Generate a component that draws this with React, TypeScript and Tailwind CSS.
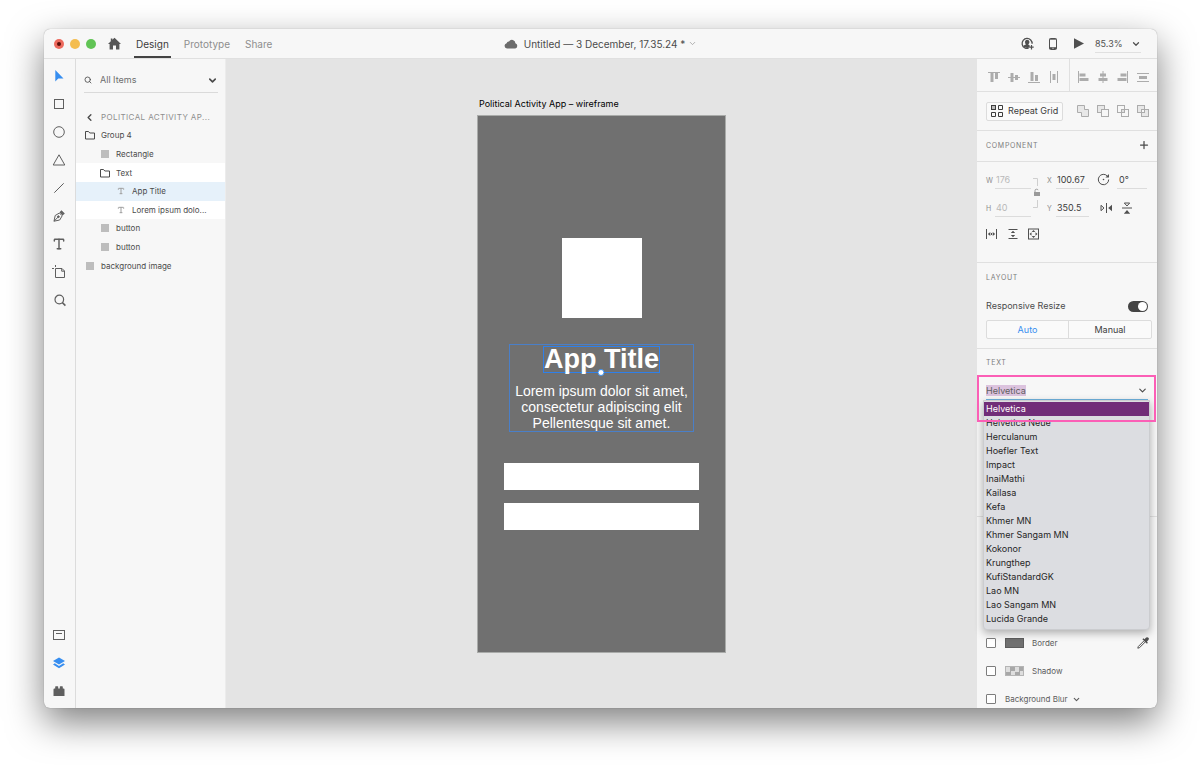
import { ReactNode, useState } from 'react';
import { ChevronDown, ChevronLeft, Plus, Search, Type } from 'lucide-react';

const FONTS = [
  'Helvetica',
  'Helvetica Neue',
  'Herculanum',
  'Hoefler Text',
  'Impact',
  'InaiMathi',
  'Kailasa',
  'Kefa',
  'Khmer MN',
  'Khmer Sangam MN',
  'Kokonor',
  'Krungthep',
  'KufiStandardGK',
  'Lao MN',
  'Lao Sangam MN',
  'Lucida Grande',
];

interface Layer {
  name: string;
  kind: 'group' | 'shape' | 'text';
  indent: string;
  bg?: string;
}

const LAYERS: Layer[] = [
  { name: 'Group 4', kind: 'group', indent: 'pl-[9px]' },
  { name: 'Rectangle', kind: 'shape', indent: 'pl-6' },
  { name: 'Text', kind: 'group', indent: 'pl-6', bg: 'bg-white' },
  { name: 'App Title', kind: 'text', indent: 'pl-10', bg: 'bg-[#e6f1fa]' },
  { name: 'Lorem ipsum dolo...', kind: 'text', indent: 'pl-10', bg: 'bg-white' },
  { name: 'button', kind: 'shape', indent: 'pl-6' },
  { name: 'button', kind: 'shape', indent: 'pl-6' },
  { name: 'background image', kind: 'shape', indent: 'pl-[9px]' },
];

// Small outlined / filled drawing on a square grid
function Icon({ size = 12, className = '', children }: { size?: number; className?: string; children: ReactNode }) {
  return (
    <svg
      width={size}
      height={size}
      viewBox={`0 0 ${size} ${size}`}
      fill="none"
      stroke="currentColor"
      strokeWidth="1"
      className={`shrink-0 ${className}`}
      aria-hidden="true"
    >
      {children}
    </svg>
  );
}

// ============================================================
// TITLE BAR
// ============================================================

function TitleBar() {
  return (
    <header className="grid h-[30px] shrink-0 grid-cols-[1fr_auto_1fr] border-b border-[#e0e0e0] text-[10px] leading-3">
      <div className="flex items-center pl-[10px]">
        <div className="flex gap-[6px]">
          <span className="flex size-[10px] items-center justify-center rounded-full bg-[#ed6a5e]">
            <span className="size-1 rounded-full bg-[#5c0f0a]" />
          </span>
          <span className="size-[10px] rounded-full bg-[#f4bd50]" />
          <span className="size-[10px] rounded-full bg-[#61c455]" />
        </div>
        <button aria-label="Home" className="ml-3 text-[#555]">
          <Icon size={13}>
            <path d="M6.5.8 13 7h-1.6v5.4H8V8.6H5v3.8H1.6V7H0L2.8 4.3V1.4h1.6v1.4z" fill="currentColor" stroke="none" />
          </Icon>
        </button>
        <nav className="ml-[13px] flex h-full gap-[11px] text-[#8e8e8e]">
          <a href="#design" className="flex items-center border-b-2 border-[#444] px-[2px] pt-[2px] text-[#3c3c3c]">Design</a>
          <a href="#prototype" className="flex items-center px-[2px]">Prototype</a>
          <a href="#share" className="flex items-center px-[2px]">Share</a>
        </nav>
      </div>

      <button className="flex items-center text-[#4b4b4b]">
        <Icon size={14} className="mr-[6px] text-[#6b6b6b]">
          <path d="M3 11.5A2.7 2.7 0 0 1 2.6 6.2 2.3 2.3 0 0 1 5 4.6 3.4 3.4 0 0 1 11.4 6.3 2.7 2.7 0 0 1 11.2 11.5z" fill="currentColor" stroke="none" />
        </Icon>
        Untitled — 3 December, 17.35.24 *
        <ChevronDown size={9} strokeWidth={2} className="ml-[3px] text-[#999]" />
      </button>

      <div className="flex items-center justify-end pr-4 text-[#505050]">
        <button aria-label="Invite" className="mr-[13px]">
          <Icon size={13}>
            <path d="M11.1 6.8A5 5 0 1 0 7.6 11.2" strokeWidth="1.3" />
            <path d="M6.2 2.7c1.5 0 2.2 1 2.2 2.3 0 1-.4 1.8-1 2.2v.6l1.4.7-.3 1.9-2.3.6-2.9-.8-.8-1.6 2.2-.8v-.6C4.3 6.8 4 6 4 5c0-1.3.7-2.3 2.2-2.3z" fill="currentColor" stroke="none" />
            <path d="M10.5 8v4.4M8.3 10.2h4.4" strokeWidth="1.2" />
          </Icon>
        </button>
        <button aria-label="Preview on device" className="mr-[14px]">
          <Icon size={12}>
            <rect x="2.5" y=".5" width="7" height="11" rx="1" />
            <path d="M2.5 1.2h7M2.5 9.7h7M2.5 10.5h7" />
            <path d="M5.5 10.3h1" stroke="#f7f7f7" />
          </Icon>
        </button>
        <button aria-label="Play" className="mr-[11px]">
          <Icon size={11}>
            <path d="M1 .3 11 5.500 1 10.700z" fill="currentColor" stroke="none" />
          </Icon>
        </button>
        <button className="flex w-[46px] items-center justify-between border-b border-[#e0e0e0] pt-[3px] pb-[2px] text-[9px]">
          85.3%
          <ChevronDown size={10} strokeWidth={3} />
        </button>
      </div>
    </header>
  );
}

// ============================================================
// LEFT SIDE
// ============================================================

const TOOLS: { label: string; icon: ReactNode; className?: string }[] = [
  { label: 'Select', className: 'text-[#378ef0]', icon: <path d="M3.300 1v11.500l3-3H11.500z" fill="currentColor" stroke="none" /> },
  { label: 'Rectangle', icon: <rect x="2.5" y="2.5" width="9" height="9" /> },
  { label: 'Ellipse', icon: <circle cx="7" cy="7" r="5.3" /> },
  { label: 'Polygon', icon: <path d="M7 1.800 12.800 12H1.200z" /> },
  { label: 'Line', icon: <path d="M2.300 11.700 11.700 2.300" /> },
  {
    label: 'Pen',
    icon: (
      <>
        <path d="M2 12.2 3.2 6.5 7.4 4l2.800 2.800-2.500 4.200z" />
        <path d="M8 2.800 11.2 6M9 1.800l3.300 3.300" strokeWidth="1.4" />
        <path d="M2 12.2 6 8.200" />
        <circle cx="6.4" cy="7.7" r=".9" fill="currentColor" />
      </>
    ),
  },
  { label: 'Text', icon: null },
  {
    label: 'Artboard',
    icon: (
      <>
        <path d="M3.5 3.5h6.500l2.500 2.500v6.500h-9z" />
        <path d="M9.700 3.500v2.700h2.800M3.500 0v2M0 3.500h2" />
      </>
    ),
  },
  {
    label: 'Zoom',
    icon: (
      <>
        <circle cx="7.3" cy="6.5" r="4.3" strokeWidth="1.2" />
        <path d="m10.4 9.6 3 3" strokeWidth="1.5" />
      </>
    ),
  },
];

function ToolBar() {
  return (
    <aside className="flex w-8 shrink-0 flex-col justify-between border-r border-[#dcdcdc] py-[3px] text-[#5f5f5f]">
      <div className="flex flex-col">
        {TOOLS.map(tool => (
          <button key={tool.label} aria-label={tool.label} className={`flex h-7 items-center pl-2 ${tool.className ?? ''}`}>
            {tool.icon ? <Icon size={14}>{tool.icon}</Icon> : <Type size={14} strokeWidth={2.5} />}
          </button>
        ))}
      </div>
      <div className="flex flex-col">
        <button aria-label="Libraries" className="flex h-7 items-center pl-[9px]">
          <Icon>
            <rect x=".5" y="1.5" width="11" height="9" />
            <path d="M3 4.5h6" />
          </Icon>
        </button>
        <button aria-label="Layers" className="flex h-7 items-center pl-[9px] text-[#378ef0]">
          <Icon>
            <path d="M6 .5 12 4 6 7.5 0 4z" fill="currentColor" stroke="none" />
            <path d="M1.800 6.300 0 7.600 6 11.300 12 7.600 10.200 6.300 6 8.900z" fill="currentColor" stroke="none" />
          </Icon>
        </button>
        <button aria-label="Plugins" className="flex h-7 items-center pl-[9px]">
          <Icon>
            <path d="M.5 4.500q0-1 1-1h.7V1.800q0-.6.600-.6h1.800q.6 0 .6.600v1.700h1.600V1.800q0-.6.600-.6h1.800q.6 0 .6.600v1.700h.7q1 0 1 1V11H.5z" fill="currentColor" stroke="none" />
          </Icon>
        </button>
      </div>
    </aside>
  );
}

function LayersPanel() {
  return (
    <aside className="w-[150px] shrink-0 border-r border-[#ececec] text-[8px] leading-3 text-[#4b4b4b]">
      <label className="mr-[7px] ml-2 mt-[9px] flex h-[25px] items-center border-b border-[#dadada]">
        <Search size={8} strokeWidth={2.5} className="mr-2" />
        <input
          aria-label="Filter layers"
          placeholder="All Items"
          className="min-w-0 flex-1 bg-transparent text-[9px] outline-none placeholder:text-[#6e6e6e]"
        />
        <ChevronDown size={11} strokeWidth={3.5} />
      </label>
      <button className="mt-[18px] flex h-3 w-full items-center pl-2 text-[#8e8e8e]">
        <ChevronLeft size={11} strokeWidth={3} className="mr-[6px] text-[#4b4b4b]" />
        <span className="tracking-wider">POLITICAL ACTIVITY AP...</span>
      </button>
      <ul className="mt-[3px] grid h-[149px] auto-rows-fr">
        {LAYERS.map((layer, idx) => (
          <li key={idx} className={`flex items-center gap-[6px] ${layer.indent} ${layer.bg ?? ''}`}>
            <span className="flex w-[10px] justify-center">
              {layer.kind === 'group' && (
                <Icon size={10}>
                  <path d="M.5 1.500h3l1.300 1.500h4.700v6h-9z" />
                </Icon>
              )}
              {layer.kind === 'shape' && <span className="size-2 bg-[#bdbdbd]" />}
              {layer.kind === 'text' && <Type size={8} strokeWidth={3} className="text-[#a0a0a0]" />}
            </span>
            {layer.name}
          </li>
        ))}
      </ul>
    </aside>
  );
}

// ============================================================
// CANVAS
// ============================================================

function Canvas() {
  return (
    <main className="flex min-w-0 flex-1 flex-col items-center bg-[#e4e4e4] pt-[39px]">
      <div className="w-[249px]">
        <p className="mb-[5px] pl-[2px] text-[9px] leading-3 text-black">Political Activity App – wireframe</p>
        <div className="flex h-[538px] flex-col items-center border border-[#a9aba9] bg-[#707070] pt-[122px] font-['Liberation_Sans',Arial,sans-serif] text-white">
          <div className="size-20 bg-white" />
          <div className="mt-[26px] flex w-[185px] flex-col items-center border border-[#4a7fc8] pt-px">
            <h1 className="relative border border-[#2f80ea] text-[27px] leading-[25px] font-bold">
              App Title
              <span className="absolute -bottom-1 left-1/2 size-[7px] -translate-x-1/2 rounded-full border border-[#378ef0] bg-white" />
            </h1>
            <p className="mt-[10px] text-center text-[14px] leading-4">
              Lorem ipsum dolor sit amet,
              <br />
              consectetur adipiscing elit
              <br />
              Pellentesque sit amet.
            </p>
          </div>
          <div className="mt-[31px] h-[27px] w-[195px] bg-white" />
          <div className="mt-[13px] h-[27px] w-[195px] bg-white" />
        </div>
      </div>
    </main>
  );
}

// ============================================================
// INSPECTOR
// ============================================================

const ALIGN_VERTICAL: { label: string; icon: ReactNode }[] = [
  { label: 'Align top', icon: <><path d="M0 1.5h12" /><path d="M4 2v9M8.500 2v6" strokeWidth="3" /></> },
  { label: 'Align middle', icon: <><path d="M0 6.5h12" /><path d="M4 2v9M8.500 4v5" strokeWidth="3" /></> },
  { label: 'Align bottom', icon: <><path d="M0 11.5h12" /><path d="M4 1v9M8.500 4v6" strokeWidth="3" /></> },
  { label: 'Distribute horizontally', icon: <><path d="M2.5 0v12M9.5 0v12" /><path d="M6 3v6" strokeWidth="3" /></> },
];

const ALIGN_HORIZONTAL: { label: string; icon: ReactNode }[] = [
  { label: 'Align left', icon: <><path d="M1.5 0v12" /><path d="M2.500 4h6M2.500 8.500h9" strokeWidth="3" /></> },
  { label: 'Align center', icon: <><path d="M6 0v12" /><path d="M3 4h6M1.500 8.500h9" strokeWidth="3" /></> },
  { label: 'Align right', icon: <><path d="M10.5 0v12" /><path d="M3.500 4h6M.5 8.500h9" strokeWidth="3" /></> },
  { label: 'Distribute vertically', icon: <><path d="M0 2.500h12M0 10.500h12" /><path d="M2 6.500h8" strokeWidth="3" /></> },
];

const BOOLEANS: { label: string; icon: ReactNode }[] = [
  { label: 'Add', icon: <path d="M.5.5h7v4h4v7h-7v-4h-4z" fill="#e8e8e8" /> },
  { label: 'Subtract', icon: <><rect x=".5" y=".5" width="7" height="7" fill="#e8e8e8" /><rect x="4.5" y="4.5" width="7" height="7" fill="#f7f7f7" /></> },
  { label: 'Intersect', icon: <><rect x=".5" y=".5" width="7" height="7" /><rect x="4.5" y="4.5" width="7" height="7" /><rect x="4.5" y="4.5" width="3" height="3" fill="#e0e0e0" /></> },
  { label: 'Exclude overlap', icon: <><rect x=".5" y=".5" width="7" height="7" fill="#e8e8e8" /><rect x="4.5" y="4.5" width="7" height="7" fill="#e8e8e8" /><rect x="4.5" y="4.5" width="3" height="3" fill="#f7f7f7" /></> },
];

function IconButtons({ items, className = '' }: { items: { label: string; icon: ReactNode }[]; className?: string }) {
  return (
    <div className={`flex items-center gap-2 ${className}`}>
      {items.map(item => (
        <button key={item.label} aria-label={item.label}>
          <Icon>{item.icon}</Icon>
        </button>
      ))}
    </div>
  );
}

function SectionTitle({ children }: { children: ReactNode }) {
  return <h2 className="text-[7px] leading-3 tracking-widest text-[#7c7c7c]">{children}</h2>;
}

function NumberField({ label, value, disabled, className = '' }: { label: string; value: string; disabled?: boolean; className?: string }) {
  return (
    <label className={`flex h-[19px] items-center text-[7px] text-[#8e8e8e] ${className}`}>
      <span className="w-[9px] pt-[2px]">{label}</span>
      <input
        defaultValue={value}
        disabled={disabled}
        className="h-full min-w-0 flex-1 border-b border-[#dcdcdc] bg-transparent pl-px text-[9px] text-[#3c3c3c] outline-none disabled:text-[#b9b9b9]"
      />
    </label>
  );
}

function Transform() {
  return (
    <section className="h-[101px] border-b border-[#e0e0e0] pt-2 pl-[9px]">
      <div className="flex">
        <div className="flex flex-col gap-[9px]">
          <NumberField label="W" value="176" disabled className="w-[45px]" />
          <NumberField label="H" value="40" disabled className="w-[45px]" />
        </div>
        <button aria-label="Lock aspect" className="w-4 text-[#cfcfcf]">
          <svg width="16" height="47" viewBox="0 0 16 47" fill="none" stroke="currentColor" aria-hidden="true">
            <path d="M2 8.500h4.500V16M2 37.500h4.500V30" />
            <rect x="3" y="22" width="6" height="4" fill="#9a9a9a" stroke="none" />
            <path d="M4 22v-1.300q0-1.500 1.500-1.500t1.500 1" stroke="#9a9a9a" />
          </svg>
        </button>
        <div className="flex flex-col gap-[9px]">
          <NumberField label="X" value="100.67" className="w-[42px]" />
          <NumberField label="Y" value="350.5" className="w-[42px]" />
        </div>
        <div className="ml-2 flex flex-col gap-[9px] text-[#505050]">
          <div className="flex h-[19px] items-center gap-[7px]">
            <Icon size={13}>
              <path d="M10.500 3.200A5.200 5.200 0 1 0 11.700 6.500" />
              <path d="M12 1v3.600H8.400z" fill="currentColor" stroke="none" />
              <circle cx="6.5" cy="6.5" r=".8" fill="currentColor" stroke="none" />
            </Icon>
            <input
              aria-label="Rotation"
              defaultValue="0°"
              className="h-full w-[30px] border-b border-[#dcdcdc] bg-transparent pl-[2px] text-[9px] text-[#3c3c3c] outline-none"
            />
          </div>
          <div className="flex h-[19px] items-center gap-[9px] pl-[3px]">
            <button aria-label="Flip horizontally">
              <Icon>
                <path d="M1 3.300v5.400L4 6zM6.500 1v10" />
                <path d="M12 2.800v6.400L8.200 6z" fill="currentColor" stroke="none" />
              </Icon>
            </button>
            <button aria-label="Flip vertically">
              <Icon>
                <path d="M3.300 1h5.400L6 4zM1 6h10" />
                <path d="M2.800 11.800h6.400L6 8z" fill="currentColor" stroke="none" />
              </Icon>
            </button>
          </div>
        </div>
      </div>
      <div className="mt-[11px] flex gap-[9px] text-[#505050]">
        <button aria-label="Fixed width">
          <Icon>
            <path d="M.5 1v10M10.500 1v10M5.500 5v2" />
            <path d="M1.800 6 4.300 4v4zM9.200 6 6.700 4v4z" fill="currentColor" stroke="none" />
          </Icon>
        </button>
        <button aria-label="Fixed height">
          <Icon>
            <path d="M1.500 1.500h9M1.500 10.500h9" />
            <path d="M6 2.800 8.200 5H3.800zM6 9.200 8.200 7H3.800z" fill="currentColor" stroke="none" />
          </Icon>
        </button>
        <button aria-label="Fix position">
          <Icon>
            <rect x=".5" y="1" width="10" height="10" />
            <path d="M5.500 2 7.300 4H3.700zM5.500 10 7.300 8H3.700zM1.500 6 3.500 4.200v3.600zM9.500 6 7.500 4.200v3.600z" fill="currentColor" stroke="none" />
          </Icon>
        </button>
      </div>
    </section>
  );
}

function FontPicker() {
  const [font, setFont] = useState('Helvetica');

  return (
    <div className="relative">
      {/* highlighted around the field and the first option */}
      <div className="pointer-events-none absolute inset-x-0 top-0 z-20 mr-px h-[47px] border-2 border-[#fb5fb6]" />
      <div className="mx-[9px] flex h-[25px] items-end justify-between border-b border-[#6fb3de] pb-[3px] text-[9px] leading-3">
        <input
          aria-label="Font"
          value={font}
          onChange={e => setFont(e.target.value)}
          className="field-sizing-content h-[11px] bg-[#dcc3de] text-[#606060] outline-none"
        />
        <ChevronDown size={11} strokeWidth={2.5} className="text-[#4b4b4b]" />
      </div>
      <ul
        role="listbox"
        aria-label="Fonts"
        className="absolute top-[25px] right-[7px] left-[6px] z-10 rounded-b-[4px] border border-[#cbcccf] bg-[#dcdde1] pt-px pb-[3px] text-[9px] leading-[14px] text-[#262626] shadow-[0_3px_8px_rgba(0,0,0,0.3)]"
      >
        {FONTS.map(name => (
          <li
            key={name}
            role="option"
            aria-selected={name === font}
            onClick={() => setFont(name)}
            className="h-[14px] pl-[2px] aria-selected:bg-[#712d78] aria-selected:text-white"
          >
            {name}
          </li>
        ))}
      </ul>
    </div>
  );
}

const BOX = 'size-[10px] appearance-none rounded-[1px] border border-[#7d7d7d] bg-white checked:bg-[#505050]';

function Inspector() {
  return (
    <aside className="w-[180px] shrink-0 text-[8px] leading-3 text-[#4b4b4b]">
      <div className="flex h-[33px] items-center justify-between border-b border-[#e0e0e0] pl-[11px] text-[#acacac]">
        <IconButtons items={ALIGN_VERTICAL} className="pt-1" />
        <div className="flex h-full items-center border-l border-[#e0e0e0] pt-1 pr-2 pl-[7px]">
          <IconButtons items={ALIGN_HORIZONTAL} />
        </div>
      </div>

      <div className="flex h-[39px] items-center justify-between border-b border-[#e0e0e0] pr-2 pl-[9px]">
        <button className="flex h-[19px] w-[77px] items-center gap-[5px] rounded-[2px] border border-[#dcdcdc] bg-[#fafafa] pl-1 text-[9px] text-[#3c3c3c]">
          <Icon>
            <rect x=".5" y=".5" width="4" height="4" fill="#bbb" />
            <path d="M7.500.5h4v4h-4zM.5 7.500h4v4h-4zM7.500 7.500h4v4h-4z" />
          </Icon>
          Repeat Grid
        </button>
        <IconButtons items={BOOLEANS} className="pb-px text-[#acacac]" />
      </div>

      <div className="flex h-[31px] items-center justify-between border-b border-[#e0e0e0] pr-[7px] pl-[9px]">
        <SectionTitle>COMPONENT</SectionTitle>
        <button aria-label="Make component" className="pb-[2px]">
          <Plus size={12} strokeWidth={2.5} />
        </button>
      </div>

      <Transform />

      <section className="h-[86px] border-b border-[#e0e0e0] pt-[9px] pr-[5px] pl-[9px]">
        <SectionTitle>LAYOUT</SectionTitle>
        <label className="mt-4 flex h-3 items-center justify-between pr-1 text-[9px]">
          Responsive Resize
          <input
            type="checkbox"
            role="switch"
            defaultChecked
            className="flex h-[11px] w-5 appearance-none items-center rounded-full bg-[#444] px-px before:size-[9px] before:rounded-full before:bg-white checked:justify-end"
          />
        </label>
        <div className="mt-2 grid h-[19px] grid-cols-2 divide-x divide-[#dcdcdc] rounded-[2px] border border-[#dcdcdc] bg-[#fafafa] text-[9px]">
          <button className="text-[#378ef0]">Auto</button>
          <button className="text-[#3c3c3c]">Manual</button>
        </div>
      </section>

      <section className="h-[168px] border-b border-[#e0e0e0]">
        <div className="pt-2 pb-[6px] pl-[9px]">
          <SectionTitle>TEXT</SectionTitle>
        </div>
        <FontPicker />
      </section>

      <section className="flex flex-col gap-[14px] pt-[119px] pr-2 pl-[9px] text-[#5c5c5c]">
        <div className="flex h-[14px] items-center">
          <input id="border" type="checkbox" className={BOX} />
          <span className="mr-2 ml-[9px] h-[10px] w-[19px] border border-[#5c5c5c] bg-[#707070]" />
          <label htmlFor="border">Border</label>
          <button aria-label="Pick colour" className="ml-auto text-[#505050]">
            <Icon>
              <path d="M7 3.800 1.300 9.500.8 11.200l1.700-.5L8.200 5" />
              <path d="m5.400 2.200 1-1 1 1L9.200.6q1.200-.8 2.200.2 1 1 0 2.200L9.900 4.700l1 1-1 1z" fill="currentColor" stroke="none" />
            </Icon>
          </button>
        </div>
        <div className="flex h-[14px] items-center">
          <input id="shadow" type="checkbox" className={BOX} />
          <span className="mr-2 ml-[9px] h-[10px] w-[19px] border border-[#b5b5b5] bg-[repeating-conic-gradient(#a8a8a8_0_25%,#dedede_0_50%)] bg-size-[9px_9px]" />
          <label htmlFor="shadow">Shadow</label>
        </div>
        <div className="flex h-[14px] items-center">
          <input id="blur" type="checkbox" className={BOX} />
          <label htmlFor="blur" className="ml-[9px]">Background Blur</label>
          <ChevronDown size={9} strokeWidth={3} className="ml-1" />
        </div>
      </section>
    </aside>
  );
}

export default function App() {
  return (
    <div className="flex min-h-screen flex-col bg-white px-[43px] pt-[29px] pb-[57px] font-[Inter,sans-serif]">
      <div className="ml-px flex flex-1 flex-col overflow-hidden rounded-[6px] bg-[#f7f7f7] shadow-[0_0_1px_rgba(0,0,0,0.4),0_14px_36px_rgba(0,0,0,0.5)]">
        <TitleBar />
        <div className="flex flex-1">
          <ToolBar />
          <LayersPanel />
          <Canvas />
          <Inspector />
        </div>
      </div>
    </div>
  );
}
